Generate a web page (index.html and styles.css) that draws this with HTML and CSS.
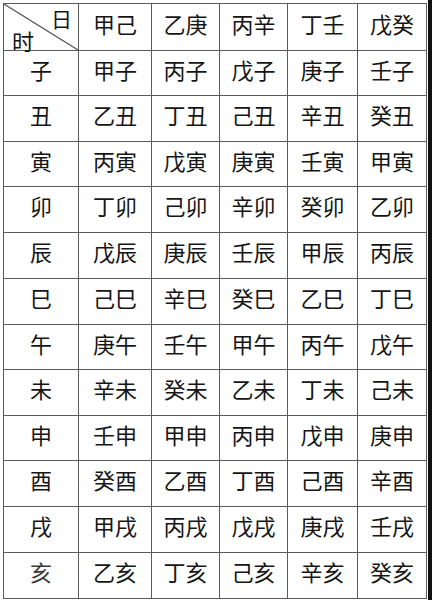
FILE: index.html
```html
<!DOCTYPE html>
<html lang="zh">
<head>
<meta charset="utf-8">
<link rel="stylesheet" href="styles.css">
</head>
<body>
<div class="page">
  <div class="grid">
    <div class="cell corner">
      <svg class="diag" viewBox="0 0 100 100" preserveAspectRatio="none"><line x1="0" y1="0" x2="100" y2="100" stroke="#555" stroke-width="1.2" vector-effect="non-scaling-stroke"/></svg>
      <span class="ri">日</span>
      <span class="shi">时</span>
    </div>
    <div class="cell">甲己</div><div class="cell">乙庚</div><div class="cell">丙辛</div><div class="cell">丁壬</div><div class="cell">戊癸</div>

    <div class="cell">子</div><div class="cell">甲子</div><div class="cell">丙子</div><div class="cell">戊子</div><div class="cell">庚子</div><div class="cell">壬子</div>
    <div class="cell">丑</div><div class="cell">乙丑</div><div class="cell">丁丑</div><div class="cell">己丑</div><div class="cell">辛丑</div><div class="cell">癸丑</div>
    <div class="cell">寅</div><div class="cell">丙寅</div><div class="cell">戊寅</div><div class="cell">庚寅</div><div class="cell">壬寅</div><div class="cell">甲寅</div>
    <div class="cell">卯</div><div class="cell">丁卯</div><div class="cell">己卯</div><div class="cell">辛卯</div><div class="cell">癸卯</div><div class="cell">乙卯</div>
    <div class="cell">辰</div><div class="cell">戊辰</div><div class="cell">庚辰</div><div class="cell">壬辰</div><div class="cell">甲辰</div><div class="cell">丙辰</div>
    <div class="cell">巳</div><div class="cell">己巳</div><div class="cell">辛巳</div><div class="cell">癸巳</div><div class="cell">乙巳</div><div class="cell">丁巳</div>
    <div class="cell">午</div><div class="cell">庚午</div><div class="cell">壬午</div><div class="cell">甲午</div><div class="cell">丙午</div><div class="cell">戊午</div>
    <div class="cell">未</div><div class="cell">辛未</div><div class="cell">癸未</div><div class="cell">乙未</div><div class="cell">丁未</div><div class="cell">己未</div>
    <div class="cell">申</div><div class="cell">壬申</div><div class="cell">甲申</div><div class="cell">丙申</div><div class="cell">戊申</div><div class="cell">庚申</div>
    <div class="cell">酉</div><div class="cell">癸酉</div><div class="cell">乙酉</div><div class="cell">丁酉</div><div class="cell">己酉</div><div class="cell">辛酉</div>
    <div class="cell">戌</div><div class="cell">甲戌</div><div class="cell">丙戌</div><div class="cell">戊戌</div><div class="cell">庚戌</div><div class="cell">壬戌</div>
    <div class="cell faded">亥</div><div class="cell">乙亥</div><div class="cell">丁亥</div><div class="cell">己亥</div><div class="cell">辛亥</div><div class="cell">癸亥</div>
  </div>
  <div class="edge"></div>
</div>
</body>
</html>
```

FILE: styles.css
```css
html, body {
  margin: 0;
  padding: 0;
  background: #ffffff;
}
body {
  width: 432px;
  height: 600px;
  overflow: hidden;
  font-family: "Noto Sans CJK SC", "Noto Sans", sans-serif;
  color: #151515;
}
.page {
  display: flex;
  justify-content: space-between;
  align-items: flex-start;
  width: 432px;
  height: 600px;
}
.grid {
  margin: 3px 0 0 3px;
  display: grid;
  grid-template-columns: 74px 72px 67px 67px 69px 68px;
  grid-template-rows: 46px 44px 45px 44px 45px 45px 45px 44px 45px 44px 45px 45px 45px;
  gap: 1px;
  padding: 1px;
  background: #5a5a5a;
}
.cell {
  background: #ffffff;
  display: flex;
  align-items: center;
  justify-content: center;
  font-size: 22px;
  line-height: 1;
  padding-bottom: 9px;
  box-sizing: border-box;
  letter-spacing: 0;
}
.corner {
  position: relative;
  flex-direction: column;
  align-items: stretch;
  justify-content: space-between;
  padding: 4px 6px 2px 8px;
  font-size: 21px;
}
.diag {
  position: absolute;
  left: 0;
  top: 0;
  width: 100%;
  height: 100%;
}
.ri {
  align-self: flex-end;
}
.shi {
  align-self: flex-start;
  font-size: 22px;
}
.faded {
  color: #3a3a3a;
}
.edge {
  width: 4px;
  height: 600px;
  background: #111111;
}
```
